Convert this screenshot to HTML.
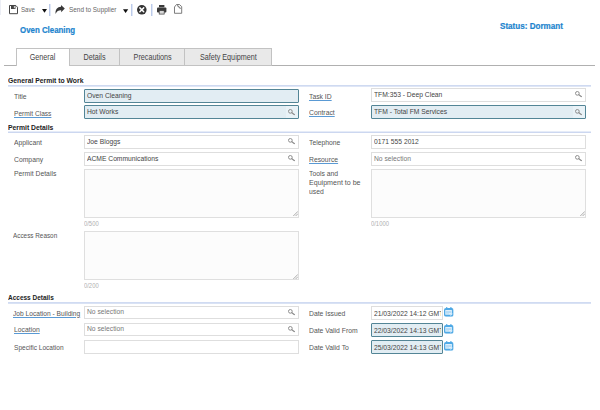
<!DOCTYPE html>
<html><head><meta charset="utf-8"><title>Permit</title>
<style>
html,body{margin:0;padding:0;background:#fff;}
body{width:600px;height:410px;position:relative;overflow:hidden;font-family:"Liberation Sans",sans-serif;font-size:8px;color:#555;}
.a{position:absolute;}
.t{position:absolute;white-space:nowrap;line-height:10px;font-size:8px;transform-origin:0 50%;transform:scaleX(.85);color:#555;}
.lk{text-decoration:underline;text-decoration-color:#5a9ad4;text-decoration-thickness:.65px;text-underline-offset:.6px;}
.h{position:absolute;white-space:nowrap;line-height:10px;font-size:8px;font-weight:bold;color:#222;transform-origin:0 50%;transform:scaleX(.85);}
.sl{position:absolute;left:8px;width:583px;height:2px;}
.in{position:absolute;box-sizing:border-box;border:1px solid #dedede;background:#fff;overflow:hidden;}
.in.d{border:1px solid #538596;background:#e2edf3;border-radius:1px;}
.in .v{position:absolute;left:2.2px;top:.7px;white-space:nowrap;line-height:10px;font-size:8px;color:#444;transform-origin:0 50%;transform:scaleX(.84);}
.in .v.n{color:#777;}
.in.d .v{top:1.2px;}
.cl{position:absolute;left:0;top:0;bottom:0;right:.5px;overflow:hidden;}
.z{position:absolute;right:0;top:0;bottom:0;width:12px;background:#e9f2f7;}
.ta{position:absolute;box-sizing:border-box;border:1px solid #dfdfdf;background:#fcfcfc;}
.c{position:absolute;white-space:nowrap;line-height:8px;font-size:6.8px;color:#b0b0b0;transform-origin:0 50%;transform:scaleX(.86);}
.tab{position:absolute;top:48px;height:18px;box-sizing:border-box;border:1px solid #c2c2c2;background:#e9e9e9;text-align:center;}
.tab span{display:inline-block;line-height:10px;font-size:8.2px;color:#444;transform:scaleX(.88);margin-top:3.5px;white-space:nowrap;}
.tab.on{background:#fff;border-bottom:none;}
.sep{position:absolute;top:4px;width:2px;height:11.5px;background:linear-gradient(90deg,#bccbea 50%,#e0e7f6 50%);}
svg{position:absolute;overflow:visible;}
</style></head><body>

<svg width="0" height="0" style="position:absolute"><defs>
<symbol id="se" viewBox="0 0 7.2 6.6"><circle cx="2.35" cy="2.35" r="1.85" fill="none" stroke="#8e8e8e" stroke-width="1"/><path d="M3.9 3.7L6.5 5.7" stroke="#8e8e8e" stroke-width="1.25" stroke-linecap="round"/></symbol>
<symbol id="cal" viewBox="0 0 9.6 9.8"><rect x="2.1" y="0" width="1.2" height="2" rx=".5" fill="#4fa9e5"/><rect x="6.3" y="0" width="1.2" height="2" rx=".5" fill="#4fa9e5"/><rect x="0" y="1" width="9.6" height="8.8" rx="2" fill="#4fa9e5"/><rect x="1.3" y="3.1" width="6.6" height="4.7" rx=".4" fill="#e4f2fc"/><path d="M2 4.4h5.2M2 5.6h5.2" stroke="#8ec8ef" stroke-width=".6"/><path d="M2 6.9h3" stroke="#8ec8ef" stroke-width=".5"/><path d="M6.4 8.6l2.2-1.8" stroke="#eaf5fd" stroke-width=".7"/></symbol>
<symbol id="gr" viewBox="0 0 5 5"><path d="M.3 5L5 .3M2.6 5L5 2.6" stroke="#8c8c8c" stroke-width=".7"/></symbol>
</defs></svg>
<!-- toolbar -->
<div class="a" style="left:0;top:0;width:1px;height:15px;background:#eceef5"></div>
<svg style="left:9.1px;top:4.8px" width="9" height="9.2" viewBox="0 0 9 9.2"><path d="M.5 .5H6.8L8.5 2.2V8.7H.5Z" fill="#fff" stroke="#454545" stroke-width="1" stroke-linejoin="round"/><rect x="2" y=".5" width="4.5" height="3.5" fill="#454545"/><rect x="4.9" y="1" width=".9" height="2.2" fill="#e8e8e8"/></svg>
<span class="t" style="left:21.4px;top:4.5px;color:#666;transform:scaleX(.765)">Save</span>
<svg style="left:41.7px;top:9px" width="5" height="3.8" viewBox="0 0 11 8"><path d="M0 0h11l-5.5 8z" fill="#111"/></svg>
<div class="sep" style="left:49px"></div>
<svg style="left:55.2px;top:4.7px" width="9.8" height="9" viewBox="0 0 9.8 9"><path d="M6 0L9.8 3.5L6.2 7.2V5.3C3.6 5.2 1.8 6.2.6 8.9C.1 4.6 2.4 1.9 6 1.8Z" fill="#383838"/></svg>
<span class="t" style="left:69px;top:4.5px;color:#666;transform:scaleX(.8)">Send to Supplier</span>
<svg style="left:123.4px;top:8.6px" width="5.2" height="4.2" viewBox="0 0 11 8"><path d="M0 0h11l-5.5 8z" fill="#111"/></svg>
<div class="sep" style="left:131px"></div>
<svg style="left:137px;top:4.8px" width="9.6" height="9.6" viewBox="0 0 20 20"><circle cx="10" cy="10" r="10" fill="#333"/><path d="M6 6l8 8M14 6l-8 8" stroke="#fff" stroke-width="3" stroke-linecap="round"/></svg>
<div class="sep" style="left:151px"></div>
<svg style="left:157px;top:4.7px" width="9.4" height="9.4" viewBox="0 0 9.4 9.4"><rect x="2" y="0" width="5.4" height="2.3" fill="#3a3a3a"/><rect x="0" y="2.4" width="9.4" height="5" rx="1" fill="#3a3a3a"/><rect x="2.2" y="5.6" width="5" height="3.5" fill="#d8d8d8" stroke="#3a3a3a" stroke-width=".7"/></svg>
<svg style="left:174px;top:4.3px" width="8.2" height="9.8" viewBox="0 0 8.2 9.8"><path d="M2.5 .5H5.4L7.7 2.6V9.3H.5V3Z" fill="#fff" stroke="#5c5c5c" stroke-width=".8" stroke-linejoin="round"/><path d="M3.3 1.4L6.6 4.6" fill="none" stroke="#6a6a6a" stroke-width="1.1"/><path d="M4 1.6L6.4 3.9" fill="none" stroke="#d8d8d8" stroke-width=".35"/></svg>

<!-- title -->
<span class="a" style="left:19.6px;top:25px;white-space:nowrap;line-height:10px;font-size:8.3px;font-weight:bold;color:#1c84ce;-webkit-text-stroke:.2px #1c84ce;transform-origin:0 50%;transform:scaleX(.95)">Oven Cleaning</span>
<span class="a" style="left:499.8px;top:21.2px;white-space:nowrap;line-height:10px;font-size:8.3px;font-weight:bold;color:#1c84ce;-webkit-text-stroke:.2px #1c84ce;transform-origin:0 50%;transform:scaleX(.975)">Status: Dormant</span>

<!-- tabs -->
<div class="a" style="left:4px;top:65px;width:590.5px;height:1px;background:#b0b0b0"></div>
<div class="tab on" style="left:16px;width:54px;height:18px"><span>General</span></div>
<div class="tab" style="left:69px;width:51px"><span>Details</span></div>
<div class="tab" style="left:119px;width:66.5px"><span>Precautions</span></div>
<div class="tab" style="left:184px;width:88px"><span>Safety Equipment</span></div>

<!-- section 1 -->
<span class="h" style="left:8px;top:76.2px">General Permit to Work</span>
<div class="sl" style="top:85px;background:linear-gradient(#cfdaf1 50%,#dfe6f6 50%)"></div>
<span class="t" style="left:13.6px;top:91.8px">Title</span>
<div class="in d" style="left:84px;top:89px;width:214.5px;height:13.5px"><span class="v">Oven Cleaning</span></div>
<span class="t lk" style="left:13.6px;top:108.6px;transform:scaleX(.825)">Permit Class</span>
<div class="in d" style="left:84px;top:105.3px;width:214.5px;height:13.5px"><i class="z"></i><span class="v">Hot Works</span></div>
<span class="t lk" style="left:309.4px;top:91.8px">Task ID</span>
<div class="in" style="left:371px;top:88px;width:215px;height:13.6px"><span class="v">TFM:353 - Deep Clean</span></div>
<span class="t lk" style="left:309.4px;top:108.4px">Contract</span>
<div class="in d" style="left:371px;top:105.3px;width:215px;height:13.5px"><i class="z"></i><span class="v">TFM - Total FM Services</span></div>

<!-- section 2 -->
<span class="h" style="left:8px;top:122.7px">Permit Details</span>
<div class="sl" style="top:131px;background:linear-gradient(#e6ecf8 50%,#ccd7f0 50%)"></div>
<span class="t" style="left:13.6px;top:137.8px">Applicant</span>
<div class="in" style="left:84px;top:135px;width:214.5px;height:13.5px"><span class="v">Joe Bloggs</span></div>
<span class="t" style="left:13.6px;top:154.8px">Company</span>
<div class="in" style="left:84px;top:152.2px;width:214.5px;height:13.5px"><span class="v">ACME Communications</span></div>
<span class="t" style="left:309.4px;top:137.8px">Telephone</span>
<div class="in" style="left:371px;top:135px;width:215px;height:13.5px"><span class="v">0171 555 2012</span></div>
<span class="t lk" style="left:309.4px;top:154.8px">Resource</span>
<div class="in" style="left:371px;top:152.2px;width:215px;height:13.5px"><span class="v n">No selection</span></div>

<span class="t" style="left:13.6px;top:168.8px">Permit Details</span>
<div class="ta" style="left:84px;top:168.5px;width:214.5px;height:49.5px"></div>
<span class="c" style="left:84px;top:219.5px">0/500</span>
<span class="t" style="left:309.4px;top:168.8px">Tools and</span>
<span class="t" style="left:309.4px;top:177.8px;transform:scaleX(.885)">Equipment to be</span>
<span class="t" style="left:309.4px;top:186.8px">used</span>
<div class="ta" style="left:371px;top:168.5px;width:215px;height:49.5px"></div>
<span class="c" style="left:371px;top:219.5px">0/1000</span>

<span class="t" style="left:13.3px;top:231.3px;transform:scaleX(.795)">Access Reason</span>
<div class="ta" style="left:84px;top:231px;width:214.5px;height:48.5px"></div>
<span class="c" style="left:84px;top:281.5px">0/200</span>

<!-- section 3 -->
<span class="h" style="left:8px;top:293.4px;transform:scaleX(.81)">Access Details</span>
<div class="sl" style="top:302px;background:linear-gradient(#d0dbf2 50%,#d9e2f4 50%)"></div>
<span class="t lk" style="left:12.9px;top:308.6px;transform:scaleX(.83)">Job Location - Building</span>
<div class="in" style="left:84px;top:305.8px;width:214.5px;height:13.5px"><span class="v n">No selection</span></div>
<span class="t lk" style="left:13.5px;top:325.3px">Location</span>
<div class="in" style="left:84px;top:322.5px;width:214.5px;height:13.5px"><span class="v n">No selection</span></div>
<span class="t" style="left:13.5px;top:342.8px;transform:scaleX(.82)">Specific Location</span>
<div class="in" style="left:84px;top:340.3px;width:214.5px;height:13.5px"></div>

<span class="t" style="left:309.4px;top:308.8px">Date Issued</span>
<div class="in" style="left:371px;top:306px;width:71.5px;height:13.5px"><div class="cl"><span class="v" style="transform:scaleX(.842);top:1.5px">21/03/2022 14:12 GMT</span></div></div>
<span class="t" style="left:309.4px;top:325.9px">Date Valid From</span>
<div class="in d" style="left:371px;top:323px;width:71.5px;height:13.7px"><div class="cl"><span class="v" style="transform:scaleX(.842);top:1.9px">22/03/2022 14:13 GMT</span></div></div>
<span class="t" style="left:309.4px;top:342.8px">Date Valid To</span>
<div class="in d" style="left:371px;top:340.3px;width:71.5px;height:13.4px"><div class="cl"><span class="v" style="transform:scaleX(.842);top:1.8px">25/03/2022 14:13 GMT</span></div></div>

<svg style="left:443.7px;top:307px" width="9.6" height="9.8"><use href="#cal"/></svg>
<svg style="left:443.7px;top:324.3px" width="9.6" height="9.8"><use href="#cal"/></svg>
<svg style="left:443.7px;top:341.3px" width="9.6" height="9.8"><use href="#cal"/></svg>
<svg style="left:292.5px;top:211.3px" width="5" height="5"><use href="#gr"/></svg>
<svg style="left:580px;top:211.3px" width="5" height="5"><use href="#gr"/></svg>
<svg style="left:292.5px;top:273.5px" width="5" height="5"><use href="#gr"/></svg>
<svg style="left:574.7px;top:91.3px" width="7.2" height="6.6"><use href="#se"/></svg>
<svg style="left:574.7px;top:108.7px" width="7.2" height="6.6"><use href="#se"/></svg>
<svg style="left:574.7px;top:155.0px" width="7.2" height="6.6"><use href="#se"/></svg>
<svg style="left:287.7px;top:108.7px" width="7.2" height="6.6"><use href="#se"/></svg>
<svg style="left:287.7px;top:138.0px" width="7.2" height="6.6"><use href="#se"/></svg>
<svg style="left:287.7px;top:155.0px" width="7.2" height="6.6"><use href="#se"/></svg>
<svg style="left:287.7px;top:308.8px" width="7.2" height="6.6"><use href="#se"/></svg>
<svg style="left:287.7px;top:325.5px" width="7.2" height="6.6"><use href="#se"/></svg>
</body></html>
